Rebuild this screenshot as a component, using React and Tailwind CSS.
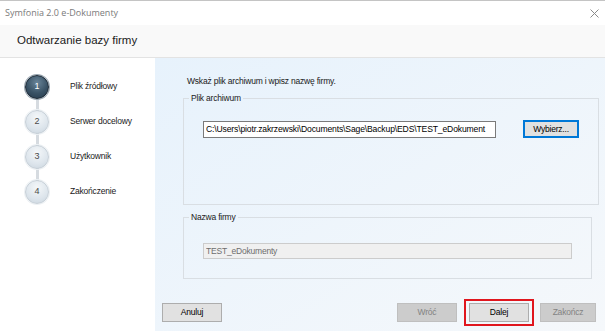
import { useState } from 'react';

const steps = [
  { n: 1, label: 'Plik źródłowy' },
  { n: 2, label: 'Serwer docelowy' },
  { n: 3, label: 'Użytkownik' },
  { n: 4, label: 'Zakończenie' },
];

function StepDot({ n, active }) {
  if (active) {
    return (
      <div className="relative z-10 flex h-[24px] w-[24px] shrink-0 items-center justify-center rounded-full border border-[#1d2a36] bg-[radial-gradient(circle_at_50%_30%,#6a8599_0%,#3a5366_55%,#24384a_100%)] text-[9px] text-white shadow-[0_0_0_1px_#9aa7b2]">
        {n}
      </div>
    );
  }
  return (
    <div className="relative z-10 flex h-[24px] w-[24px] shrink-0 items-center justify-center rounded-full border border-[#c7d0d8] bg-[radial-gradient(circle_at_50%_30%,#f4f7f9_0%,#dde5ec_60%,#c9d4dd_100%)] text-[9px] text-[#4a4a4a] shadow-[0_0_0_1px_#edf1f4]">
      {n}
    </div>
  );
}

function WinButton({ children, disabled, w = 'w-[60px]' }) {
  return (
    <button
      type="button"
      disabled={disabled}
      className={
        'block h-[19px] shrink-0 border text-[8.5px] leading-none tracking-[-0.2px] ' +
        w +
        (disabled
          ? ' border-[#bfbfbf] bg-[#cccccc] text-[#838383]'
          : ' border-[#adadad] bg-[#e1e1e1] text-black')
      }
    >
      {children}
    </button>
  );
}

export default function App() {
  const [path] = useState(
    'C:\\Users\\piotr.zakrzewski\\Documents\\Sage\\Backup\\EDS\\TEST_eDokument'
  );

  return (
    <div className="flex h-[331px] w-[605px] flex-col overflow-hidden bg-white font-['Liberation_Sans',Arial,sans-serif]">
      <div className="h-[1px] bg-[#c4c4c4]" />

      {/* title bar */}
      <div className="flex h-[24px] items-center justify-between pl-[5px] pr-[6px]">
        <span className="font-['Open_Sans',sans-serif] text-[9px] text-[#7a7a7a]">
          Symfonia 2.0 e-Dokumenty
        </span>
        <svg width="9" height="9" viewBox="0 0 9 9">
          <path d="M0.5 0.5 L8.5 8.5 M8.5 0.5 L0.5 8.5" stroke="#8a8a8a" strokeWidth="1" />
        </svg>
      </div>

      {/* header */}
      <div className="flex h-[33px] items-center border-b border-[#e3e3e3] bg-[#f9f9f9] pl-[17px] text-[11.5px] text-[#1a1a1a]">
        Odtwarzanie bazy firmy
      </div>

      <div className="flex flex-1">
        {/* steps */}
        <div className="w-[155px] shrink-0 bg-white pt-[11px]">
          <div className="relative">
            <div className="absolute left-[36px] top-[17px] h-[105px] w-[3px] bg-[#d6dbe0]" />
            {steps.map((s) => (
              <div key={s.n} className="flex h-[35px] items-center pl-[25px]">
                <StepDot n={s.n} active={s.n === 1} />
                <span className="ml-[21px] text-[8.5px] tracking-[-0.2px] text-[#1a1a1a]">
                  {s.label}
                </span>
              </div>
            ))}
          </div>
        </div>

        {/* content */}
        <div className="flex w-[450px] shrink-0 flex-col bg-linear-to-br from-[#e7f2fc] to-[#f5f8fb] text-[8.5px] tracking-[-0.2px]">
          <p className="pl-[32px] pt-[17px] leading-[13px] text-[#1a1a1a]">
            Wskaż plik archiwum i wpisz nazwę firmy.
          </p>

          <fieldset className="ml-[28px] mr-[13px] mt-[4px] h-[113px] border border-[#d9dee3] px-[19px]">
            <legend className="ml-[-14px] px-[2px] leading-[12px] text-[#1a1a1a]">
              Plik archiwum
            </legend>
            <div className="mt-[16px] flex items-center">
              <input
                readOnly
                value={path}
                className="h-[17px] w-[293px] border border-[#7a7a7a] bg-white px-[2px] text-[8.6px] tracking-[-0.15px] text-black outline-none"
              />
              <button
                type="button"
                className="ml-[27px] h-[18px] w-[56px] border border-[#0078d7] bg-[#e1e1e1] text-black shadow-[inset_0_0_0_1px_#0078d7]"
              >
                Wybierz...
              </button>
            </div>
          </fieldset>

          <fieldset className="ml-[28px] mr-[13px] mt-[6px] h-[68px] border border-[#d9dee3] px-[19px]">
            <legend className="ml-[-14px] px-[2px] leading-[12px] text-[#1a1a1a]">
              Nazwa firmy
            </legend>
            <input
              disabled
              value="TEST_eDokumenty"
              className="mt-[20px] h-[16px] w-[369px] border border-[#cccccc] bg-[#f0f0f0] px-[2px] text-[#6d6d6d]"
            />
          </fieldset>

          <div className="mt-auto flex items-center justify-between pb-[5px] pl-[7px] pr-[9px]">
            <WinButton>Anuluj</WinButton>
            <div className="flex items-center">
              <WinButton disabled>Wróć</WinButton>
              <div className="ml-[7px] flex border-2 border-[#e0161e] px-[3px] py-[2px]">
                <WinButton>Dalej</WinButton>
              </div>
              <div className="ml-[6px]">
                <WinButton disabled w="w-[56px]">
                  Zakończ
                </WinButton>
              </div>
            </div>
          </div>
        </div>
      </div>
    </div>
  );
}
